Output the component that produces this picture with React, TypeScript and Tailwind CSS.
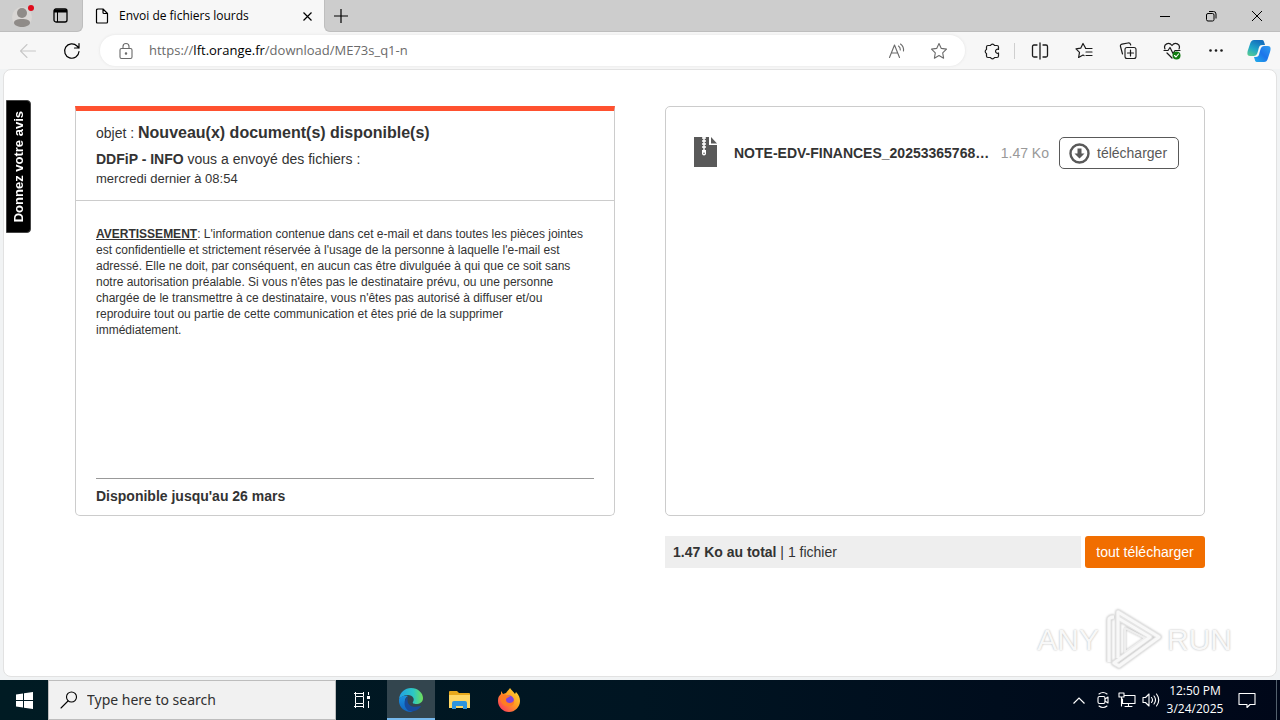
import type { ReactNode } from 'react';

const arial = "font-['Liberation_Sans',Arial,sans-serif]";
const ui = "font-['Open_Sans','Noto_Sans',sans-serif]";

function Icon({ size = 18, className = '', children }: { size?: number; className?: string; children: ReactNode }) {
  return (
    <svg width={size} height={size} viewBox="0 0 18 18" fill="none" stroke="currentColor" strokeWidth="1.1" strokeLinecap="round" strokeLinejoin="round" className={className} aria-hidden="true">
      {children}
    </svg>
  );
}

function ToolButton({ label, children }: { label: string; children: ReactNode }) {
  return (
    <button type="button" aria-label={label} className="flex h-8 w-11 shrink-0 items-center justify-center text-[#1b1b1b]">
      {children}
    </button>
  );
}

function WindowButton({ label, d }: { label: string; d: string }) {
  return (
    <button type="button" aria-label={label} className="flex h-8 w-[46px] items-center justify-center text-black">
      <svg width="12" height="12" viewBox="0 0 12 12" fill="none" stroke="currentColor" strokeWidth="1" aria-hidden="true">
        <path d={d} />
      </svg>
    </button>
  );
}

function TabStrip() {
  return (
    <header className="flex h-8 bg-[#f7f7f7] text-black">
      <div className="flex w-[83px] items-center rounded-br-md border-b border-r border-[#bebebe] bg-[#cdcdcd] pl-3">
        <button type="button" aria-label="Profile" className="flex w-9 items-center">
          <svg width="22" height="24" viewBox="0 0 22 24" aria-hidden="true">
            <circle cx="10" cy="13" r="10" fill="#d9d6d4" />
            <circle cx="10" cy="9" r="5" fill="#8f8b88" />
            <path d="M2 19c0-3 3-4 8-4s8 1 8 4c0 2-4 4-8 4s-8-2-8-4z" fill="#8f8b88" />
            <circle cx="19" cy="4" r="3" fill="#e00b1c" />
          </svg>
        </button>
        <button type="button" aria-label="Tab actions" className="flex w-6 items-center justify-center">
          <svg width="15" height="15" viewBox="0 0 15 15" fill="none" stroke="currentColor" aria-hidden="true">
            <rect x="1" y="1" width="13" height="13" rx="2" strokeWidth="1.3" />
            <path d="M1 3h13" strokeWidth="3" />
            <path d="M4.500 4v10" />
          </svg>
        </button>
      </div>
      <div className="flex w-[241px] items-center pl-3">
        <svg width="14" height="16" viewBox="0 0 14 16" fill="none" stroke="currentColor" strokeWidth="1.2" strokeLinejoin="round" aria-hidden="true">
          <path d="M3 1h5l4.500 4.500V14q0 1-1 1H2.500q-1 0-1-1V2q0-1 1.500-1zM8 1v3.500q0 1 1 1h3.500" />
        </svg>
        <span className="flex-1 pl-[10px] text-xs">Envoi de fichiers lourds</span>
        <button type="button" aria-label="Close tab" className="mr-px flex h-6 w-8 items-center justify-center">
          <svg width="9" height="9" viewBox="0 0 9 9" stroke="currentColor" strokeWidth="1.2" aria-hidden="true"><path d="M.5.5l8 8M8.500.5l-8 8" /></svg>
        </button>
      </div>
      <div className="flex flex-1 justify-between rounded-bl-md border-b border-l border-[#bebebe] bg-[#cdcdcd]">
        <button type="button" aria-label="New tab" className="flex w-8 items-center justify-center">
          <svg width="14" height="14" viewBox="0 0 14 14" stroke="currentColor" strokeWidth="1.2" aria-hidden="true"><path d="M7 0v14M0 7h14" /></svg>
        </button>
        <div className="flex">
          <WindowButton label="Minimize" d="M1 6.500h10" />
          <WindowButton label="Restore" d="M1.500 5q0-1.500 1.500-1.500h4.500q1.500 0 1.500 1.500v4.500q0 1.500-1.500 1.500h-4.500q-1.500 0-1.500-1.500zM4 1.500h4.500q2.500 0 2.500 2.500v4.500" />
          <WindowButton label="Close" d="M1 1l10 10M11 1l-10 10" />
        </div>
      </div>
    </header>
  );
}

function Toolbar() {
  return (
    <nav aria-label="Browser toolbar" className="flex h-[37px] items-center bg-[#f7f7f7] pl-1.5">
      <button type="button" aria-label="Back" className="flex w-11 justify-center text-[#c8c8c8]">
        <Icon><path d="M1.500 9h15M8 2.500L1.500 9 8 15.500" /></Icon>
      </button>
      <button type="button" aria-label="Refresh" className="flex w-11 justify-center text-black">
        <Icon><path d="M16 9.500a7.200 7.200 0 1 1-2-5.500l2 2M16 1.500V6h-4.500" strokeWidth="1.200" /></Icon>
      </button>
      <div className="ml-1.5 flex h-[31px] min-w-0 flex-1 items-center rounded-full bg-white pl-[17px] pr-0.5 text-[#6a6a6a] shadow-[0_0_3px_#e2e2e2]">
        <Icon>
          <rect x="3" y="6.500" width="12" height="10" rx="1.500" />
          <path d="M6 6.500V4.500a3 3 0 0 1 6 0v2" />
          <circle cx="9" cy="11.500" r=".7" fill="currentColor" />
        </Icon>
        <div className="flex-1 pl-[14px] text-[13px]">https://<span className="text-black">lft.orange.fr</span>/download/ME73s_q1-n</div>
        <button type="button" aria-label="Read aloud" className="flex w-9 justify-center">
          <Icon><path d="M1.500 15.500L6.500 3l5 12.500M3.500 11h6M10.500 4q2 1.500 1.800 4M12.500 2q3.500 2.500 3 7" /></Icon>
        </button>
        <button type="button" aria-label="Add to favorites" className="flex w-12 justify-center">
          <Icon><path d="M9 1.500l2.300 4.900 5.200.7-3.800 3.700.9 5.400L9 13.600l-4.600 2.600.9-5.400L1.500 7.100l5.200-.7z" /></Icon>
        </button>
      </div>
      <div className="flex pl-[5px]">
        <ToolButton label="Extensions">
          <Icon><path d="M5 3.500h2.500a2.200 2.200 0 0 1 4 0H14q1.500 0 1.500 1.500v2.500a2 2 0 1 0 0 3.500v3q0 1.500-1.500 1.500h-2.500a2.200 2.200 0 0 1-4 0H5Q3.500 15.500 3.500 14v-2.500a2.200 2.200 0 0 1 0-4V5Q3.500 3.500 5 3.500z" strokeWidth="1.200" /></Icon>
        </ToolButton>
        <span className="my-2 mr-[3px] w-px bg-[#cfcfcf]" />
        <ToolButton label="Split screen">
          <Icon><path d="M6 3H3Q1.500 3 1.500 4.500v9Q1.500 15 3 15h3M12 3h3q1.500 0 1.500 1.500v9q0 1.500-1.500 1.500h-3M9 1v16" strokeWidth="1.300" /></Icon>
        </ToolButton>
        <ToolButton label="Favorites">
          <Icon><path d="M10.500 6L8 1.500 5.700 6.200l-4.700.7 3.500 3.500-.9 5.100L8 13l1 .6M10.500 6.500h6.500M11 10h6M11 13.500h6" strokeWidth="1.200" /></Icon>
        </ToolButton>
        <ToolButton label="Collections">
          <Icon><rect x="6" y="5.500" width="11" height="11" rx="2" /><path d="M11.500 8v6M8.500 11h6M3.500 12L1.500 4.500Q1 2.700 3 2.200l6-1.200q2-.4 2.500 1.300l.2.700" strokeWidth="1.200" /></Icon>
        </ToolButton>
        <ToolButton label="Browser essentials">
          <Icon><path d="M2 7C0 2 6-.5 9 3.500 12-.5 18 2 16 7M1 8.500h4l2-3 3 6 2-3h5M4 11l5 5" strokeWidth="1.200" /><circle cx="13.500" cy="13.500" r="4" fill="#107c10" stroke="none" /><path d="M11.500 13.500l1.500 1.500 2.500-3" stroke="white" /></Icon>
        </ToolButton>
        <ToolButton label="Settings and more">
          <svg width="14" height="3" viewBox="0 0 14 3" fill="currentColor" aria-hidden="true"><circle cx="1.500" cy="1.500" r="1.300" /><circle cx="7" cy="1.500" r="1.300" /><circle cx="12.500" cy="1.500" r="1.300" /></svg>
        </ToolButton>
        <button type="button" aria-label="Copilot" className="flex h-8 w-[42px] shrink-0 items-center justify-center">
          <svg width="24" height="24" viewBox="0 0 24 24" aria-hidden="true">
            <defs>
              <linearGradient id="cp1" x1="0" y1="1" x2=".5" y2="0"><stop stopColor="#5fd08a" /><stop offset=".5" stopColor="#20a6c8" /><stop offset="1" stopColor="#1470bd" /></linearGradient>
              <linearGradient id="cp2" x1="1" y1="0" x2="0" y2="1"><stop stopColor="#2f9df0" /><stop offset=".5" stopColor="#1d75ea" /><stop offset="1" stopColor="#22b1ea" /></linearGradient>
            </defs>
            <path d="M7 1h8c2 0 2 2 3 5h-3c-3 0-3 3-4 6-1 4-2 5-5 5H3c-3 0-3-3-2-6l2-6c1-3 2-4 4-4z" fill="url(#cp1)" />
            <path d="M17 23H10c-2 0-2-2-3-5h2c3 0 3-3 4-6 1-4 2-5 5-5h3c3 0 3 3 2 6l-2 6c-1 3-2 4-4 4z" fill="url(#cp2)" />
          </svg>
        </button>
      </div>
    </nav>
  );
}

function MessageCard() {
  return (
    <section className="flex h-[410px] flex-col rounded-b-[5px] border border-t-[5px] border-[#cccccc] border-t-[#ff512f]">
      <div className="border-b border-[#cccccc] px-5 pb-[13px] pt-2.5">
        <h1 className="text-sm leading-6">objet : <b className="text-base leading-6">Nouveau(x) document(s) disponible(s)</b></h1>
        <p className="pt-0.5 text-sm leading-6"><b>DDFiP - INFO</b> vous a envoyé des fichiers :</p>
        <p className="text-[13px] leading-4">mercredi dernier à 08:54</p>
      </div>
      <p className="px-5 pt-[25px] text-xs leading-4">
        <b className="underline">AVERTISSEMENT</b>: L'information contenue dans cet e-mail et dans toutes les pièces jointes<br />
        est confidentielle et strictement réservée à l'usage de la personne à laquelle l'e-mail est<br />
        adressé. Elle ne doit, par conséquent, en aucun cas être divulguée à qui que ce soit sans<br />
        notre autorisation préalable. Si vous n'êtes pas le destinataire prévu, ou une personne<br />
        chargée de le transmettre à ce destinataire, vous n'êtes pas autorisé à diffuser et/ou<br />
        reproduire tout ou partie de cette communication et êtes prié de la supprimer<br />
        immédiatement.
      </p>
      <p className="mx-5 mt-auto border-t border-[#999999] pb-[9px] pt-[7px] text-sm font-bold leading-5">Disponible jusqu'au 26 mars</p>
    </section>
  );
}

function FilesPanel() {
  return (
    <section className="flex min-w-0 flex-col gap-5">
      <div className="h-[410px] rounded-[5px] border border-[#cccccc] px-[25px] pt-[30px]">
        <div className="flex items-center pl-[3px]">
          <svg width="23" height="30" viewBox="0 0 23 30" aria-hidden="true" className="shrink-0 self-start">
            <path d="M0 0h15v8h8v22H0z" fill="#595959" />
            <path d="M17 0l6 6.500h-6z" fill="#595959" />
            <path d="M8 1h4M8 4h4M8 7h4M8 10h4" stroke="white" strokeWidth="1.500" />
            <path d="M10 0v13" stroke="white" strokeWidth="1.500" />
            <path d="M8 13h4v3.500a2 2 0 0 1-4 0z" fill="white" />
            <circle cx="10" cy="16.300" r=".8" fill="#595959" />
          </svg>
          <b className="flex-1 whitespace-nowrap pl-[17px] text-sm">NOTE-EDV-FINANCES_20253365768…</b>
          <span className="whitespace-nowrap px-2.5 text-sm text-[#999999]">1.47 Ko</span>
          <button type="button" className="flex h-8 w-[120px] shrink-0 items-center gap-[7px] rounded-[5px] border border-[#595959] pl-[9px] text-sm text-[#595959]">
            <svg width="21" height="21" viewBox="0 0 21 21" aria-hidden="true">
              <circle cx="10.500" cy="10.500" r="9" fill="none" stroke="#595959" strokeWidth="2.400" />
              <path d="M8.500 5.500h4v5h3l-5 5-5-5h3z" fill="#595959" />
            </svg>
            télécharger
          </button>
        </div>
      </div>
      <div className="flex h-8 gap-1">
        <p className="flex-1 bg-[#eeeeee] px-2 text-sm leading-8"><b>1.47 Ko au total</b> | 1 fichier</p>
        <button type="button" className="w-[120px] rounded-[3px] bg-[#f16e00] text-sm text-white">tout télécharger</button>
      </div>
    </section>
  );
}

function Watermark() {
  return (
    <div className="pointer-events-none absolute bottom-1 right-11 flex items-center gap-1 text-[30px] leading-none text-[#f8f8f8] [text-shadow:0_0_2px_#b0b0b0]">
      <span>ANY</span>
      <svg width="60" height="64" viewBox="0 0 60 64" fill="none" strokeLinejoin="round" aria-hidden="true" className="drop-shadow-[0_0_1px_#bbbbbb]">
        <path d="M6 54V12q0-3 5-3M15 50V4l41 25-40 29-5-3 36-26-32-19" stroke="#e4e4e4" strokeWidth="5" />
        <path d="M22 20v24l20-14-20-10" stroke="#eeeeee" strokeWidth="2" />
        <path d="M6 54V12q0-3 5-3M15 50V4l41 25-40 29-5-3 36-26-32-19" stroke="#f8f8f8" strokeWidth="3" />
      </svg>
      <span>RUN</span>
    </div>
  );
}

function TaskButton({ label, children }: { label: string; children: ReactNode }) {
  return <button type="button" aria-label={label} className="flex h-10 w-12 items-center justify-center">{children}</button>;
}

function Taskbar() {
  return (
    <footer className={`${ui} flex h-10 bg-linear-to-r from-[#001b23] via-[#001522] to-[#000719] text-white`}>
      <TaskButton label="Start">
        <svg width="17" height="17" viewBox="0 0 17 17" fill="white" aria-hidden="true"><path d="M0 2.500L7 1.500V8H0zM8 1.300L17 0v8H8zM0 9h7v6.500l-7-1zM8 9h9v8l-9-1.300z" /></svg>
      </TaskButton>
      <label className="flex w-72 items-center border border-[#bdbdbd] bg-[#f1f1f1] pl-[11px] text-black">
        <Icon><circle cx="11.500" cy="6" r="5" /><path d="M8 10L1 17" /></Icon>
        <input aria-label="Search" placeholder="Type here to search" className="ml-[9px] w-56 bg-transparent font-['Noto_Sans',sans-serif] text-sm placeholder:text-[#303030]" />
      </label>
      <div className="flex gap-px pl-0.5">
        <TaskButton label="Task view">
          <svg width="16" height="16" viewBox="0 0 16 16" fill="none" stroke="white" aria-hidden="true"><path d="M0 1.500h10M0 14.500h10M1.500 4.500h8v7h-8zM1.500 0v4M9.500 0v4M1.500 12v4M9.500 12v4M14.500 0v3M14.500 9v7" /><path d="M13 5.500h3" strokeWidth="3" /></svg>
        </TaskButton>
        <span className="flex border-b-2 border-[#76b9ed] bg-[#33454e]">
          <TaskButton label="Microsoft Edge">
            <svg width="24" height="24" viewBox="0 0 24 24" aria-hidden="true">
              <defs>
                <linearGradient id="e1"><stop stopColor="#219fe5" /><stop offset=".6" stopColor="#2cc8c4" /><stop offset="1" stopColor="#70df58" /></linearGradient>
                <linearGradient id="e2" x1="0" y1="0" x2="0" y2="1"><stop stopColor="#1990df" /><stop offset="1" stopColor="#1165c0" /></linearGradient>
              </defs>
              <path d="M0 11C1 4 6 0 12 0c7 0 12 5 12 10 0 4-3 6-7 6-2 0-4-1-3-2 2-3 0-7-5-7-4 0-7 2-9 4z" fill="url(#e1)" />
              <path d="M0 11c2-3 6-4 9-3-4 2-4 7-1 11 2 3 5 4 6 4.800C6 25-1 19 0 11z" fill="url(#e2)" />
              <path d="M9 9c-2 6 2 12 12 9 1 0 1 0 .5 1-3 4-9 6-13 3C4 18 5 11 9 9z" fill="#174b9c" />
            </svg>
          </TaskButton>
        </span>
        <TaskButton label="File Explorer">
          <svg width="22" height="20" viewBox="0 0 22 20" aria-hidden="true">
            <path d="M0 2q0-1 1-1h7l2 2h10q1 0 1 1v14H0z" fill="#e8a91c" />
            <path d="M0 5h21v13H0z" fill="#ffd765" />
            <path d="M3 19v-6q0-2 2-2h11q2 0 2 2v6h-4v-3H7v3z" fill="#2f94dd" />
          </svg>
        </TaskButton>
        <TaskButton label="Firefox">
          <svg width="24" height="24" viewBox="0 0 24 24" aria-hidden="true">
            <defs><linearGradient id="ff" x1="1" y1="0" x2="0" y2="1"><stop stopColor="#ffe338" /><stop offset=".45" stopColor="#ff9e22" /><stop offset="1" stopColor="#fb2667" /></linearGradient></defs>
            <path d="M4 3l2 3 3-1c1-2 3-3 4-5 2 3 3 3 5 6l1-2c3 3 4 6 4 9 0 6-5 11-11 11S1 19 1 13c0-4 1-5 3-7z" fill="url(#ff)" />
            <circle cx="12" cy="12.500" r="5" fill="#8244d8" />
            <path d="M3 8c2-2 4-2 6-1 1 1 3 1 4 1-1 2-4 1-4 4 0 4 7 4 8 0 1 5-3 7-7 6-4 0-7-4-7-10z" fill="#ff7c22" />
          </svg>
        </TaskButton>
      </div>
      <div className="ml-auto flex items-center">
        <button type="button" aria-label="Show hidden icons" className="flex w-6 justify-center"><svg width="12" height="7" viewBox="0 0 12 7" fill="none" stroke="white" strokeWidth="1.200" aria-hidden="true"><path d="M.5 6.500L6 1l5.500 5.500" /></svg></button>
        <button type="button" aria-label="Meet now" className="flex w-6 justify-center"><Icon><rect x="4" y="5.500" width="7" height="7" rx="1.500" /><path d="M11 8l3-2v6l-3-2M5 3q4-3 8 0M5 15q4 3 8 0" /></Icon></button>
        <button type="button" aria-label="Network" className="flex w-6 justify-center"><Icon><path d="M6 4.500h11v8H4.500V8M10.500 12.500v3M7 15.500h7M1 2h5v4H1zM3.500 6v9" /></Icon></button>
        <button type="button" aria-label="Volume" className="flex w-6 justify-center"><Icon><path d="M1 6.500h2.500L7 3v12l-3.500-3.500H1zM9.500 6.500q2 2.500 0 5M12 5q3 4 0 8M14.500 3q4.500 6 0 12" /></Icon></button>
        <time dateTime="2025-03-24T12:50" className="w-16 text-center text-xs leading-[18px]"><span className="block">12:50 PM</span><span className="block">3/24/2025</span></time>
        <button type="button" aria-label="Notifications" className="flex w-10 justify-center"><Icon><path d="M1 2.500h16v11h-5l-3 3v-3H1z" /></Icon></button>
        <span className="ml-[9px] mr-[3px] h-10 w-px bg-[#53606d]" />
      </div>
    </footer>
  );
}

export default function App() {
  return (
    <div className="flex min-h-screen flex-col bg-[#f1f3f4]">
      <div className={ui}>
        <TabStrip />
        <Toolbar />
      </div>
      <main className={`${arial} relative mx-[3px] mb-[3px] flex-1 rounded-lg border border-[#e2e2e2] bg-white px-[71px] pt-9 text-[#333333]`}>
        <button type="button" className="absolute left-0.5 top-[30px] flex h-[133px] w-[25px] items-center justify-center rounded-r-[4px] border border-[#444444] bg-black text-[13px] font-bold text-white">
          <span className="rotate-180 whitespace-nowrap [writing-mode:vertical-rl]">Donnez votre avis</span>
        </button>
        <div className="grid grid-cols-2 gap-[50px]">
          <MessageCard />
          <FilesPanel />
        </div>
        <Watermark />
      </main>
      <Taskbar />
    </div>
  );
}
